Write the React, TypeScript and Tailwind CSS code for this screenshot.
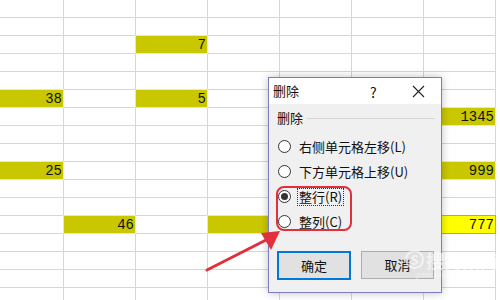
import React from 'react';

const ROWS = 17;
const COLS = 7;

// highlighted cells keyed by row-col
const marks: Record<string, { v: string; bright?: boolean }> = {
  '2-2': { v: '7' },
  '5-0': { v: '38' },
  '5-2': { v: '5' },
  '6-6': { v: '1345' },
  '9-0': { v: '25' },
  '9-6': { v: '999' },
  '12-1': { v: '46' },
  '12-3': { v: '' },
  '12-6': { v: '777', bright: true },
};

const Radio = ({ label, checked, focus }: { label: string; checked?: boolean; focus?: boolean }) => (
  <div className="flex items-center h-[25px]">
    <span className="w-[13px] h-[13px] rounded-full border border-[#333] bg-white flex items-center justify-center">
      {checked && <span className="w-[7px] h-[7px] rounded-full bg-[#333]" />}
    </span>
    <span className={`ml-[7px] px-[1px] leading-[16px] ${focus ? 'outline outline-1 outline-dotted outline-[#333]' : ''}`}>
      {label}
    </span>
  </div>
);

export default function App() {
  const cells = [];
  for (let r = 0; r < ROWS; r++) {
    for (let c = 0; c < COLS; c++) {
      const m = marks[`${r}-${c}`];
      cells.push(
        <div key={`${r}-${c}`} className="relative border-r border-b border-[#d6d6d6]">
          {m && (
            <div
              className={`absolute -left-[1px] -top-[1px] right-[-1px] bottom-[-1px] flex items-center justify-end pr-[1px] text-[14px] leading-none ${
                m.bright ? 'bg-[#ffff00] border border-[#b8b800]' : 'bg-[#c9c800] border border-[#f2f27a]'
              }`}
            >
              {m.v}
            </div>
          )}
        </div>
      );
    }
  }

  return (
    <div
      className="relative w-[500px] h-[300px] overflow-hidden bg-white text-[#111]"
      style={{ fontFamily: '"Noto Sans CJK SC", "Noto Sans", sans-serif' }}
    >
      <div
        className="grid grid-cols-[64px_repeat(6,72px)] grid-rows-[repeat(17,18px)]"
        style={{ fontFamily: '"Liberation Mono", monospace' }}
      >
        {cells}
      </div>

      {/* dialog */}
      <div className="absolute left-[268px] top-[77px] w-[174px] h-[216px] border border-[#7b7bc6] bg-[#f0f0f0] shadow-[0_0_8px_rgba(0,0,0,0.25)] text-[13px] flex flex-col">
        <div className="h-[26px] bg-white flex items-center pl-[4px] relative">
          <span>删除</span>
          <span className="absolute left-[101px] top-[4px] text-[14px]">?</span>
          <svg className="absolute left-[143px] top-[7px]" width="13" height="13" viewBox="0 0 13 13">
            <path d="M1 1 L12 12 M12 1 L1 12" stroke="#222" strokeWidth="1.1" />
          </svg>
        </div>
        <div className="pl-[8px] pr-[6px] pt-[5px]">
          <div className="flex items-center gap-[4px] h-[18px]">
            <span>删除</span>
            <span className="flex-1 h-px bg-[#d5d5d5]" />
          </div>
          <div className="mt-[7px] pl-[1px] flex flex-col">
            <Radio label="右侧单元格左移(L)" />
            <Radio label="下方单元格上移(U)" />
            <Radio label="整行(R)" checked focus />
            <Radio label="整列(C)" />
          </div>
          <div className="mt-[17px] flex gap-[10px]">
            <div className="w-[74px] h-[29px] border-2 border-[#0078d7] bg-[#e1e1e1] flex items-center justify-center">
              确定
            </div>
            <div className="w-[73px] h-[28px] border border-[#adadad] bg-[#e1e1e1] flex items-center justify-center">
              取消
            </div>
          </div>
        </div>
      </div>

      {/* red highlight */}
      <div className="absolute left-[276px] top-[186px] w-[76px] h-[45px] border-[2.5px] border-[#e1303c] rounded-[8px]" />

      {/* arrow */}
      <svg className="absolute left-0 top-0 pointer-events-none" width="500" height="300">
        <line x1="207" y1="270" x2="266" y2="240" stroke="#e1303c" strokeWidth="3" strokeLinecap="round" />
        <polygon points="280,231 261,233 271,250" fill="#e1303c" />
      </svg>

      {/* watermark */}
      <div className="absolute left-[405px] top-[250px] flex items-center gap-[2px] text-white/60 pointer-events-none">
        <span className="w-[19px] h-[19px] rounded-full border-2 border-white/60 flex items-center justify-center text-[13px] font-bold leading-none">S</span>
        <span className="text-[18px] leading-none font-bold">搜狗指南</span>
      </div>
      <div className="absolute left-[415px] top-[270px] text-[7px] text-white/50 pointer-events-none" style={{ fontFamily: '"Liberation Sans", sans-serif' }}>
        guide.sogou.com
      </div>
    </div>
  );
}
